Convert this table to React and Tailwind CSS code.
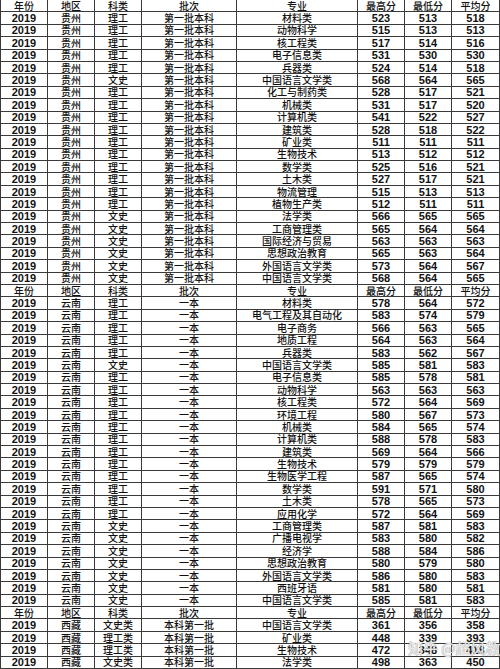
import React from 'react';

const header = ['年份', '地区', '科类', '批次', '专业', '最高分', '最低分', '平均分'];

// [科类, 专业, 最高, 最低, 平均]
const guizhou = [
  ['理工', '材料类', 523, 513, 518],
  ['理工', '动物科学', 515, 513, 513],
  ['理工', '核工程类', 517, 514, 516],
  ['理工', '电子信息类', 531, 530, 530],
  ['理工', '兵器类', 524, 514, 518],
  ['文史', '中国语言文学类', 568, 564, 565],
  ['理工', '化工与制药类', 528, 517, 521],
  ['理工', '机械类', 531, 517, 520],
  ['理工', '计算机类', 541, 522, 527],
  ['理工', '建筑类', 528, 518, 522],
  ['理工', '矿业类', 511, 511, 511],
  ['理工', '生物技术', 513, 512, 512],
  ['理工', '数学类', 525, 516, 521],
  ['理工', '土木类', 527, 517, 521],
  ['理工', '物流管理', 515, 513, 513],
  ['理工', '植物生产类', 512, 511, 511],
  ['文史', '法学类', 566, 565, 565],
  ['文史', '工商管理类', 565, 564, 564],
  ['文史', '国际经济与贸易', 563, 563, 563],
  ['文史', '思想政治教育', 565, 563, 564],
  ['文史', '外国语言文学类', 573, 564, 567],
  ['文史', '中国语言文学类', 568, 564, 565],
].map((r) => ['贵州', r[0], '第一批本科', ...r.slice(1)]);

const yunnan = [
  ['理工', '材料类', 578, 564, 572],
  ['理工', '电气工程及其自动化', 583, 574, 579],
  ['理工', '电子商务', 566, 563, 565],
  ['理工', '地质工程', 564, 563, 564],
  ['理工', '兵器类', 583, 562, 567],
  ['文史', '中国语言文学类', 585, 581, 583],
  ['理工', '电子信息类', 585, 578, 581],
  ['理工', '动物科学', 563, 563, 563],
  ['理工', '核工程类', 572, 564, 569],
  ['理工', '环境工程', 580, 567, 573],
  ['理工', '机械类', 584, 565, 574],
  ['理工', '计算机类', 588, 578, 583],
  ['理工', '建筑类', 569, 564, 566],
  ['理工', '生物技术', 579, 579, 579],
  ['理工', '生物医学工程', 587, 565, 574],
  ['理工', '数学类', 591, 571, 580],
  ['理工', '土木类', 578, 565, 573],
  ['理工', '应用化学', 572, 564, 569],
  ['文史', '工商管理类', 587, 581, 583],
  ['文史', '广播电视学', 583, 580, 582],
  ['文史', '经济学', 588, 584, 586],
  ['文史', '思想政治教育', 580, 579, 580],
  ['文史', '外国语言文学类', 586, 580, 583],
  ['文史', '西班牙语', 581, 580, 581],
  ['文史', '中国语言文学类', 585, 581, 583],
].map((r) => ['云南', r[0], '一本', ...r.slice(1)]);

const xizang = [
  ['文史类', '中国语言文学类', 361, 356, 358],
  ['理工类', '矿业类', 448, 339, 393],
  ['理工类', '生物技术', 472, 348, 418],
  ['文史类', '法学类', 498, 363, 450],
].map((r) => ['西藏', r[0], '本科第一批', ...r.slice(1)]);

const rows = [
  { head: true, cells: header },
  ...guizhou.map((c) => ({ cells: ['2019', ...c] })),
  { head: true, cells: header },
  ...yunnan.map((c) => ({ cells: ['2019', ...c] })),
  { head: true, cells: header },
  ...xizang.map((c) => ({ cells: ['2019', ...c] })),
];

const cjk = "font-['Noto_Sans_CJK_SC',sans-serif]";
const num = "font-['Liberation_Sans',sans-serif] font-bold text-[11px]";

function Cell({ value, col, head }) {
  const isNum = !head && (col === 0 || col >= 5);
  return (
    <div
      className={
        'flex min-h-0 items-center justify-center whitespace-nowrap leading-[10px] border-b border-r border-[#3a3a3a] ' +
        (col === 0 ? 'border-l ' : '') +
        (isNum ? num : cjk + ' text-[10px] font-medium')
      }
    >
      {value}
    </div>
  );
}

export default function App() {
  return (
    <div className="relative w-[500px] h-[669px] bg-white text-[#111] overflow-hidden">
      <div className="grid h-[669px] grid-cols-[48px_47px_47px_95px_121px_47px_47px_48px] grid-rows-[repeat(54,minmax(0,1fr))]">
        {rows.map((r, i) =>
          r.cells.map((v, j) => <Cell key={i + '-' + j} value={v} col={j} head={r.head} />)
        )}
      </div>
      <div
        className={
          'absolute left-[408px] top-[640px] text-[15px] leading-none text-white/80 whitespace-nowrap ' + cjk
        }
        style={{ textShadow: '0 0 1px #999, 0 0 1px #999' }}
      >
        知乎 @超风教育
      </div>
    </div>
  );
}
